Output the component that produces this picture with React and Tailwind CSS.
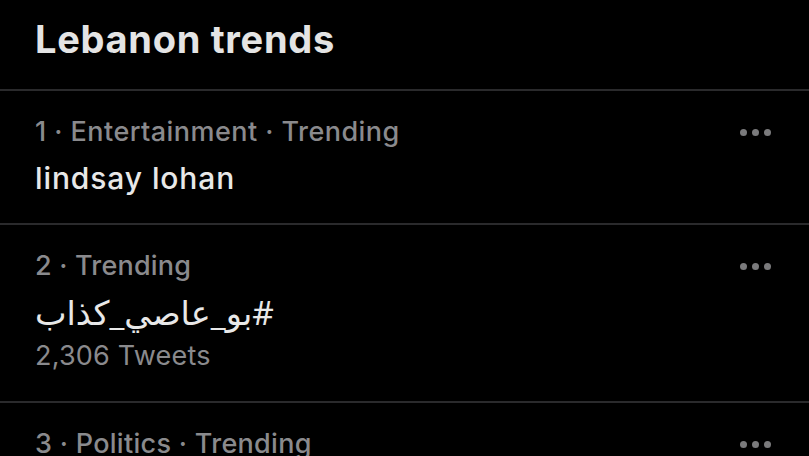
export default function App() {
  const font = { fontFamily: 'Inter, "Noto Sans", "DejaVu Sans", sans-serif' };
  const Dots = () => (
    <div className="flex gap-[5px] pt-[15px] pr-[38px]">
      <span className="block h-[7px] w-[7px] rounded-full bg-[#7a7a7c]" />
      <span className="block h-[7px] w-[7px] rounded-full bg-[#7a7a7c]" />
      <span className="block h-[7px] w-[7px] rounded-full bg-[#7a7a7c]" />
    </div>
  );
  return (
    <div className="h-[456px] w-[809px] overflow-hidden bg-black" style={font}>
      <div className="h-[89px] pl-[35px] pt-[17px]">
        <div className="text-[38px] font-bold leading-[44px] text-[#e4e4e4] tracking-[0.7px]">Lebanon trends</div>
      </div>
      <div className="h-[2px] bg-[#2a2a2c]" />
      <div className="flex h-[132px] items-start justify-between pl-[35px] pt-[23px]">
        <div>
          <div className="text-[27px] font-medium leading-[36px] text-[#8a8a8d] tracking-[0.45px]">1 · Entertainment · Trending</div>
          <div className="mt-[8px] text-[30px] font-medium leading-[40px] text-[#e8e8e8] tracking-[0.9px]">lindsay lohan</div>
        </div>
        <Dots />
      </div>
      <div className="h-[2px] bg-[#2a2a2c]" />
      <div className="flex h-[176px] items-start justify-between pl-[35px] pt-[23px]">
        <div>
          <div className="text-[27px] font-medium leading-[36px] text-[#8a8a8d] tracking-[0.2px]">2 · Trending</div>
          <div className="mt-[8px] text-left text-[33.5px] leading-[40px] text-[#e8e8e8]" style={{ fontFamily: '"Noto Sans", "DejaVu Sans", sans-serif' }}>
            <span dir="rtl" className="inline-block">#بو_عاصي_كذاب</span>
          </div>
          <div className="mt-[6px] text-[27px] leading-[36px] text-[#8a8a8d] tracking-[0.2px]">2,306 Tweets</div>
        </div>
        <Dots />
      </div>
      <div className="h-[2px] bg-[#2a2a2c]" />
      <div className="flex items-start justify-between pl-[35px] pt-[23px]">
        <div>
          <div className="text-[27px] font-medium leading-[36px] text-[#8a8a8d] tracking-[0.3px]">3 · Politics · Trending</div>
        </div>
        <Dots />
      </div>
    </div>
  );
}
